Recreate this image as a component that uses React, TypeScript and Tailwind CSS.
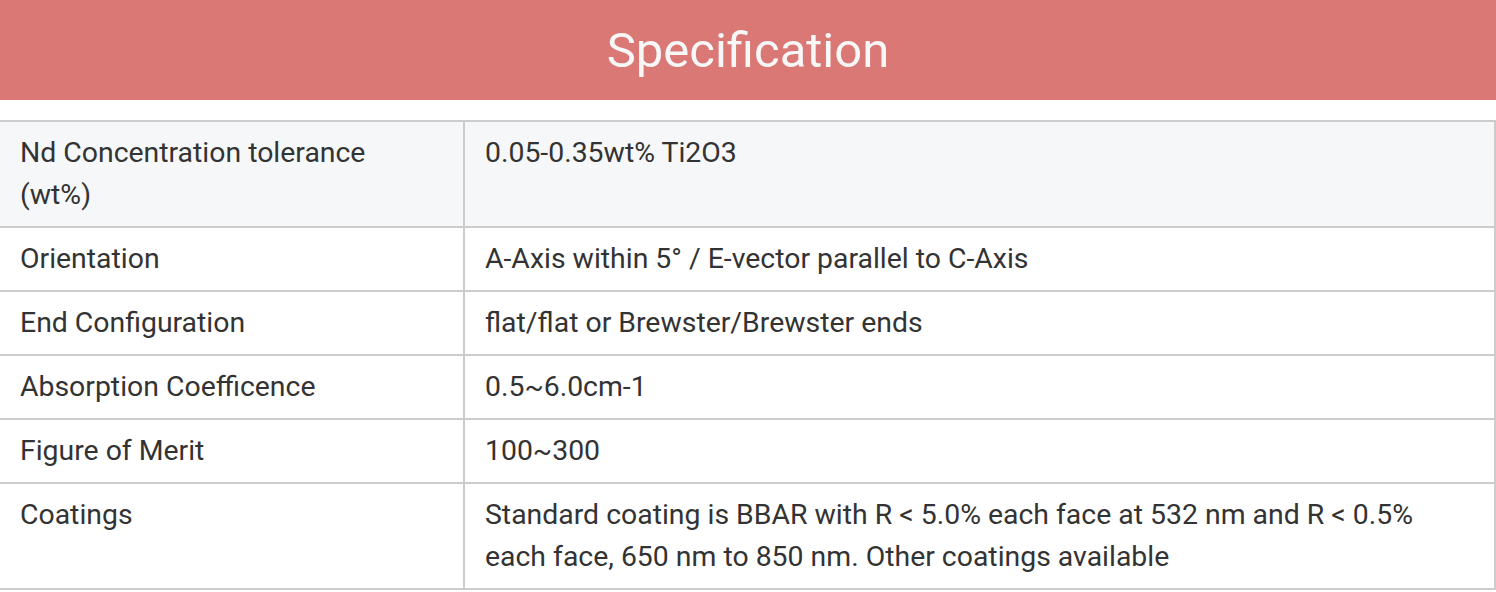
const rows: { label: string; value: string }[] = [
  { label: "Nd Concentration tolerance (wt%)", value: "0.05-0.35wt% Ti2O3" },
  { label: "Orientation", value: "A-Axis within 5° / E-vector parallel to C-Axis" },
  { label: "End Configuration", value: "flat/flat or Brewster/Brewster ends" },
  { label: "Absorption Coefficence", value: "0.5~6.0cm-1" },
  { label: "Figure of Merit", value: "100~300" },
  {
    label: "Coatings",
    value:
      "Standard coating is BBAR with R < 5.0% each face at 532 nm and R < 0.5% each face, 650 nm to 850 nm. Other coatings available",
  },
];

const App = () => {
  return (
    <div className="w-[1496px] bg-white font-['Roboto',sans-serif]">
      <div className="flex h-[100px] items-center justify-center bg-[#d97874]">
        <h2 className="text-[49px] leading-none text-[#f7f7f7]">Specification</h2>
      </div>

      <div className="mt-5 grid grid-cols-[465px_1fr] border-t-2 border-[#cccccc] text-[28.4px] leading-[42px] text-[#333333]">
        {rows.map((row, idx) => {
          const bg = idx === 0 ? "bg-[#f6f7f9]" : "bg-white";
          return (
            <div key={row.label} className="contents">
              <div className={`border-b-2 border-r-2 border-[#cccccc] py-[10px] pl-5 pr-24 ${bg}`}>
                {row.label}
              </div>
              <div className={`border-b-2 border-r-2 border-[#cccccc] py-[10px] pl-5 pr-14 ${bg}`}>
                {row.value}
              </div>
            </div>
          );
        })}
      </div>
    </div>
  );
};

export default App;
